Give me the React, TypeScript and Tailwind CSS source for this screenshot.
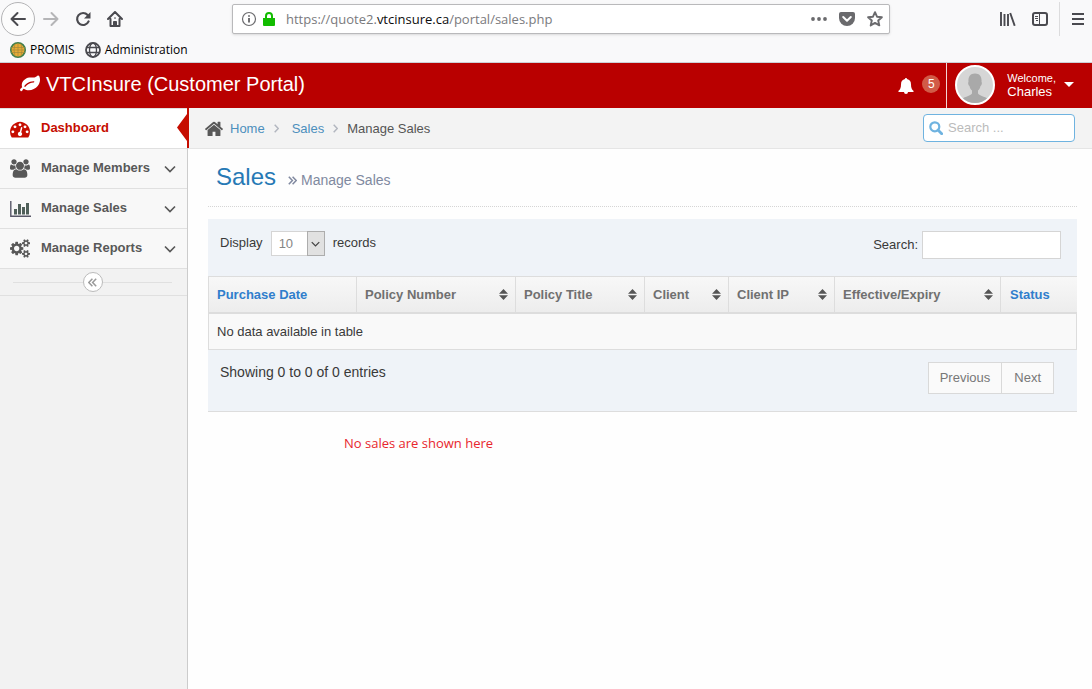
import type { ReactNode } from "react";

const LEAF =
  "M1280 704q0-26-19-45t-45-19q-172 0-318 49.5t-259.5 134-235.5 219.5q-19 21-19 45 0 26 19 45t45 19q24 0 45-19 27-24 74-71t67-66q137-124 268.5-176t313.5-52q26 0 45-19t19-45zm512-198q0 95-20 193-46 224-184.5 383t-357.5 268q-214 108-438 108-148 0-286-47-15-5-88-42t-96-37q-16 0-39.5 32t-45 70-52.5 70-60 32q-43 0-63.5-17.5t-45.5-59.5q-2-4-6-11t-5.5-10-3-9.5-1.5-13.5q0-35 31-73.5t68-65.5 68-56 31-48q0-4-14-38t-16-44q-9-51-9-104 0-115 43.5-220t119-184.5 170.5-139 204-95.5q55-18 145-25.5t179.5-9 178.5-6 163.5-24 113.5-56.5l29.5-29.5 29.5-28 27-20 36.5-16 43.5-4.5q39 0 70.5 46t47.5 112 24 124 8 96z";
const GAUGE =
  "M384 1152q0-53-37.5-90.5t-90.5-37.5-90.5 37.5-37.5 90.5 37.5 90.5 90.5 37.5 90.5-37.5 37.5-90.5zm192-448q0-53-37.5-90.5t-90.5-37.5-90.5 37.5-37.5 90.5 37.5 90.5 90.5 37.5 90.5-37.5 37.5-90.5zm428 481l101-382q6-26-7.5-48.5t-38.5-29.5-48 6.5-30 39.5l-101 382q-60 5-107 43.5t-63 98.5q-20 77 20 146t117 89 146-20 89-117q16-60-6-117t-72-91zm660-33q0-53-37.5-90.5t-90.5-37.5-90.5 37.5-37.5 90.5 37.5 90.5 90.5 37.5 90.5-37.5 37.5-90.5zm-640-640q0-53-37.5-90.5t-90.5-37.5-90.5 37.5-37.5 90.5 37.5 90.5 90.5 37.5 90.5-37.5 37.5-90.5zm448 192q0-53-37.5-90.5t-90.5-37.5-90.5 37.5-37.5 90.5 37.5 90.5 90.5 37.5 90.5-37.5 37.5-90.5zm320 448q0 261-141 483-19 29-54 29h-1402q-35 0-54-29-141-221-141-483 0-182 71-348t191-286 286-191 348-71 348 71 286 191 191 286 71 348z";
const USERS =
  "M593 896q-162 5-265 128h-134q-82 0-138-40.5t-56-118.5q0-353 124-353 6 0 43.5 21t97.5 42.5 119 21.5q67 0 133-23-5 37-5 66 0 139 81 256zm1071 637q0 120-73 189.5t-194 69.5h-874q-121 0-194-69.5t-73-189.5q0-53 3.5-103.5t14-109 26.5-108.5 43-97.5 62-81 85.5-53.5 111.5-20q10 0 43 21.5t73 48 107 48 135 21.5 135-21.5 107-48 73-48 43-21.5q61 0 111.5 20t85.5 53.5 62 81 43 97.5 26.5 108.5 14 109 3.5 103.5zm-1024-1277q0 106-75 181t-181 75-181-75-75-181 75-181 181-75 181 75 75 181zm704 384q0 159-112.5 271.5t-271.5 112.5-271.5-112.5-112.5-271.5 112.5-271.5 271.5-112.5 271.5 112.5 112.5 271.5zm576 225q0 78-56 118.5t-138 40.5h-134q-103-123-265-128 81-117 81-256 0-29-5-66 66 23 133 23 59 0 119-21.5t97.5-42.5 43.5-21q124 0 124 353zm-128-609q0 106-75 181t-181 75-181-75-75-181 75-181 181-75 181 75 75 181z";
const COGS =
  "M896 896q0-106-75-181t-181-75-181 75-75 181 75 181 181 75 181-75 75-181zm768 512q0-52-38-90t-90-38-90 38-38 90q0 53 37.5 90.5t90.5 37.5 90.5-37.5 37.5-90.5zm0-1024q0-52-38-90t-90-38-90 38-38 90q0 53 37.5 90.5t90.5 37.5 90.5-37.5 37.5-90.5zm-384 421v185q0 10-7 19.5t-16 10.5l-155 24q-11 35-32 76 34 48 90 115 7 11 7 20 0 12-7 19-23 30-82.5 89.5t-78.5 59.5q-11 0-21-7l-115-90q-37 19-77 31-11 108-23 155-7 24-30 24h-186q-11 0-20-7.5t-10-17.5l-23-153q-34-10-75-31l-118 89q-7 7-20 7-11 0-21-8-144-133-144-160 0-9 7-19 10-14 41-53t47-61q-23-44-35-82l-152-24q-10-1-17-9.5t-7-19.5v-185q0-10 7-19.5t16-10.5l155-24q11-35 32-76-34-48-90-115-7-11-7-20 0-12 7-20 22-30 82-89t79-59q11 0 21 7l115 90q34-18 77-32 11-108 23-154 7-24 30-24h186q11 0 20 7.5t10 17.5l23 153q34 10 75 31l118-89q8-7 20-7 11 0 21 8 144 133 144 160 0 8-7 19-12 16-42 54t-45 60q23 48 34 82l152 23q10 2 17 10.5t7 19.5zm640 533v140q0 16-149 31-12 27-30 52 51 113 51 138 0 4-4 7-122 71-124 71-8 0-46-47t-52-68q-20 2-30 2t-30-2q-14 21-52 68t-46 47q-2 0-124-71-4-3-4-7 0-25 51-138-18-25-30-52-149-15-149-31v-140q0-16 149-31 13-29 30-52-51-113-51-138 0-4 4-7 4-2 35-20t59-34 30-16q8 0 46 46.5t52 67.5q20-2 30-2t30 2q51-71 92-112l6-2q4 0 124 70 4 3 4 7 0 25-51 138 17 23 30 52 149 15 149 31zm0-1024v140q0 16-149 31-12 27-30 52 51 113 51 138 0 4-4 7-122 71-124 71-8 0-46-47t-52-68q-20 2-30 2t-30-2q-14 21-52 68t-46 47q-2 0-124-71-4-3-4-7 0-25 51-138-18-25-30-52-149-15-149-31v-140q0-16 149-31 13-29 30-52-51-113-51-138 0-4 4-7 4-2 35-20t59-34 30-16q8 0 46 46.5t52 67.5q20-2 30-2t30 2q51-71 92-112l6-2q4 0 124 70 4 3 4 7 0 25-51 138 17 23 30 52 149 15 149 31z";
const HOME =
  "M1472 992v480q0 26-19 45t-45 19h-384v-384h-256v384h-384q-26 0-45-19t-19-45v-480q0-1 .5-3t.5-3l575-474 575 474q1 2 1 6zm223-69l-62 74q-8 9-21 11h-3q-13 0-21-7l-692-577-692 577q-12 8-24 7-13-2-21-11l-62-74q-8-10-7-23.5t11-21.5l719-599q32-26 76-26t76 26l244 204v-195q0-14 9-23t23-9h192q14 0 23 9t9 23v408l219 182q10 8 11 21.5t-7 23.5z";
const BELL =
  "M8 0c.7 0 1 .5 1 1.1 2.600.5 4 2.400 4 5.300 0 3.500.9 5.200 2.700 6.600 0 .6-.4 1-1 1H10a2 2 0 0 1-4 0H1.300c-.6 0-1-.4-1-1C2.100 11.600 3 9.900 3 6.400c0-2.900 1.400-4.800 4-5.300C7 .5 7.300 0 8 0z";

function Glyph({ d, box, className }: { d: string; box: string; className: string }) {
  return (
    <svg viewBox={box} className={className} fill="currentColor" aria-hidden="true">
      <path d={d} />
    </svg>
  );
}

function Chevron({ className }: { className: string }) {
  return (
    <svg viewBox="0 0 12 8" className={className} fill="none" stroke="currentColor" strokeWidth="1.7" aria-hidden="true">
      <path d="M1 1.5l5 5 5-5" />
    </svg>
  );
}

function DoubleAngle({ className }: { className: string }) {
  return (
    <svg viewBox="0 0 9 9" className={className} fill="none" stroke="currentColor" strokeWidth="1.5" aria-hidden="true">
      <path d="M.8.8l3.6 3.7L.8 8.2M4.600.8l3.600 3.700-3.600 3.700" />
    </svg>
  );
}

function BrowserChrome() {
  return (
    <div className="h-[63px] border-b border-[#ccd0d6] bg-[#f9f9fa] font-['Open_Sans','Noto_Sans',sans-serif] text-[#4a4a4f]">
      <div className="flex h-[38px] items-center">
        <button aria-label="Back" className="ml-px flex size-[34px] items-center justify-center rounded-full border border-[#b4b4b6] bg-[#fcfcfc]">
          <svg viewBox="0 0 16 16" className="size-4" fill="none" stroke="currentColor" strokeWidth="2" strokeLinecap="round" strokeLinejoin="round">
            <path d="M15 8H1.5M7.5 2l-6 6 6 6" />
          </svg>
        </button>
        <button aria-label="Forward" className="ml-2 text-[#b5b5b7]">
          <svg viewBox="0 0 16 16" className="size-4" fill="none" stroke="currentColor" strokeWidth="2" strokeLinecap="round" strokeLinejoin="round">
            <path d="M1 8h13.5M8.5 2l6 6-6 6" />
          </svg>
        </button>
        <button aria-label="Reload" className="ml-4">
          <svg viewBox="0 0 16 16" className="size-4" fill="none" stroke="currentColor" strokeWidth="2.2" strokeLinecap="round">
            <path d="M13.6 10.4A6 6 0 1 1 12.6 4" />
            <path d="M15.5 1v6.500H9z" fill="currentColor" stroke="none" />
          </svg>
        </button>
        <button aria-label="Home page" className="ml-4">
          <svg viewBox="0 0 16 16" className="size-4" fill="none" stroke="currentColor" strokeWidth="2" strokeLinecap="round" strokeLinejoin="round">
            <path d="M1 8l7-7 7 7M3.5 8v7h9V8" />
            <path d="M6.500 15v-4.500h3V15z" fill="currentColor" strokeWidth="1" />
            <path d="M8 7v.1" strokeWidth="1.600" />
          </svg>
        </button>
        <div className="ml-[109px] flex h-[30px] w-[658px] items-center rounded-xs border border-[#b9b9bb] bg-white pr-1.5 pl-2 shadow-sm">
          <svg viewBox="0 0 16 16" className="size-4" fill="none" stroke="#6b6b6e" aria-hidden="true">
            <circle cx="8" cy="8" r="6.5" strokeWidth="1.200" />
            <path d="M8 7v4.500M8 4.200v1.600" strokeWidth="1.900" />
          </svg>
          <svg viewBox="0 0 12 14" className="ml-1.5 h-3.5 w-3" aria-hidden="true">
            <path d="M0 6h12v7a1 1 0 0 1-1 1H1a1 1 0 0 1-1-1z" fill="#12bc00" />
            <path d="M3 7V4a3 3 0 0 1 6 0v3" fill="none" stroke="#12bc00" strokeWidth="2" />
          </svg>
          <div className="ml-[11px] flex-1 pt-0.5 text-[13px] text-[#7a7a7d]">
            https://quote2.<span className="text-[#0c0c0d]">vtcinsure.ca</span>/portal/sales.php
          </div>
          <svg viewBox="0 0 16 4" className="h-1 w-4" fill="#6a6a6d" aria-hidden="true">
            <circle cx="2" cy="2" r="1.9" />
            <circle cx="8" cy="2" r="1.9" />
            <circle cx="14" cy="2" r="1.9" />
          </svg>
          <svg viewBox="0 0 16 14" className="ml-3 h-3.5 w-4" aria-hidden="true">
            <path d="M2 0h12a2 2 0 0 1 2 2v4a8 8 0 0 1-16 0V2a2 2 0 0 1 2-2z" fill="#6a6a6d" />
            <path d="M4.200 5L8 8.700 11.800 5" fill="none" stroke="#fff" strokeWidth="2" strokeLinecap="round" strokeLinejoin="round" />
          </svg>
          <svg viewBox="0 0 16 16" className="ml-3 size-4" fill="none" stroke="#6a6a6d" strokeWidth="1.9" strokeLinejoin="round" aria-hidden="true">
            <path d="M8 1.200l2 4.500 4.900.5-3.700 3.300 1.100 4.900L8 11.900l-4.300 2.500 1.100-4.900L1.100 6.200 6 5.700z" />
          </svg>
        </div>
        <div className="ml-auto flex h-[34px] items-center">
          <svg viewBox="0 0 16 14" className="h-3.5 w-4" fill="none" stroke="currentColor" strokeWidth="1.9" aria-hidden="true">
            <path d="M1 0v14M4.500 2v12M8 2v12M10.200 1l4.500 12.800" />
          </svg>
          <svg viewBox="0 0 16 14" className="ml-4 h-3.5 w-4" fill="none" stroke="currentColor" aria-hidden="true">
            <rect x="1" y="1" width="14" height="12" rx="2" strokeWidth="2" />
            <path d="M7.500 1v12M3 4.500h3M3 6.500h3M4 8.500h2" />
          </svg>
          <div className="ml-[11px] mr-3 h-[34px] border-l border-[#dcdcdd]" />
          <svg viewBox="0 0 12 12" className="mr-2 size-3" stroke="currentColor" strokeWidth="2" aria-hidden="true">
            <path d="M0 1h12M0 6h12M0 11h12" />
          </svg>
        </div>
      </div>
      <div className="flex h-6 items-center pl-2.5 text-xs text-black">
        <svg viewBox="0 0 16 16" className="size-4" aria-hidden="true">
          <circle cx="8" cy="8" r="7.200" fill="#e8ab35" stroke="#3d7d4b" strokeWidth="1.600" />
          <path d="M1 5.500h14M1 8h14M1 10.500h14M8 1v14M5 1.500Q3 8 5 14.500M11 1.500Q13 8 11 14.500" fill="none" stroke="#a08a3c" strokeWidth=".7" />
        </svg>
        <a href="#promis" className="ml-1">PROMIS</a>
        <svg viewBox="0 0 16 16" className="ml-2.5 size-4" fill="none" stroke="#4a4a4f" strokeWidth="1.3" aria-hidden="true">
          <circle cx="8" cy="8" r="7" strokeWidth="1.8" />
          <ellipse cx="8" cy="8" rx="3.5" ry="7" />
          <path d="M1.500 5.500h13M1.500 10.500h13" />
        </svg>
        <a href="#administration" className="ml-1">Administration</a>
      </div>
    </div>
  );
}

function PortalHeader() {
  return (
    <header className="flex h-[45px] items-stretch bg-[#b90000] text-white">
      <a href="#portal" className="ml-5 flex items-center pb-1 text-xl">
        <Glyph d={LEAF} box="0 0 1792 1792" className="mr-1.5 size-5" />
        VTCInsure (Customer Portal)
      </a>
      <div className="ml-auto flex">
        <button aria-label="Notifications" className="flex items-center pr-1.5 pb-1">
          <Glyph d={BELL} box="0 0 16 16" className="mt-1 size-4" />
          <span className="ml-2 flex size-[18px] items-center justify-center rounded-full bg-[#d15b47] text-xs">5</span>
        </button>
        <button className="flex items-center border-l border-[#f3d4d4] pr-[18px] pb-0.5 pl-2 text-left">
          <svg viewBox="0 0 40 40" className="size-10" aria-hidden="true">
            <clipPath id="portrait">
              <circle cx="20" cy="20" r="18" />
            </clipPath>
            <circle cx="20" cy="20" r="19" fill="#d6d6d6" stroke="#fff" strokeWidth="2" />
            <path clipPath="url(#portrait)" fill="#a9a9a9" d="M20 8.500c-5 0-7 3.500-6.500 8.500-.8.500-.3 3.500 1 4 .4 2 1.300 3.500 2.500 4.500v3c-2 3-9 3-11.500 7V40h29v-4.500c-2.500-4-9.500-4-11.500-7v-3c1.200-1 2.100-2.500 2.500-4.500 1.300-.5 1.800-3.500 1-4 .5-5-1.500-8.500-6.500-8.500z" />
          </svg>
          <span className="ml-3 text-[13px] leading-[14px]">
            <span className="block text-[11px]">Welcome,</span>
            Charles
          </span>
          <svg viewBox="0 0 10 5" className="ml-2 h-[5px] w-2.5" fill="currentColor" aria-hidden="true">
            <path d="M0 0h10L5 5z" />
          </svg>
        </button>
      </div>
    </header>
  );
}

function NavItem({ icon, label }: { icon: ReactNode; label: string }) {
  return (
    <li className="border-t border-[#e0e0e0]">
      <a href="#menu" className="flex h-[39px] items-center bg-[#f8f8f8] pr-[11px] pl-2.5 text-[#585858]">
        <span className="flex w-5 justify-center">{icon}</span>
        <span className="mb-0.5 ml-[11px] flex-1">{label}</span>
        <Chevron className="h-2 w-3" />
      </a>
    </li>
  );
}

function Sidebar() {
  return (
    <nav className="w-[188px] shrink-0 border-r border-[#cccccc] bg-[#f2f2f2]">
      <ul className="text-[13px] font-bold">
        <li className="relative border-t border-[#e0e0e0]">
          <a href="#dashboard" className="flex h-[39px] items-center bg-white pl-2.5 text-[#c60d00]">
            <Glyph d={GAUGE} box="0 0 1792 1792" className="size-5" />
            <span className="mb-0.5 ml-[11px]">Dashboard</span>
          </a>
          <svg viewBox="0 0 12 40" className="absolute -top-px -right-[2px] h-10 w-3" fill="#c60d00" aria-hidden="true">
            <path d="M10 0h2v40h-2V33L0 19.500 10 6z" />
          </svg>
        </li>
        <NavItem label="Manage Members" icon={<Glyph d={USERS} box="0 0 1920 1792" className="h-[19px] w-5" />} />
        <NavItem
          label="Manage Sales"
          icon={
            <svg viewBox="0 0 21 16" className="h-4 w-[21px] shrink-0" aria-hidden="true">
              <path d="M.8 0v15.200H21" fill="none" stroke="#585868" strokeWidth="1.4" />
              <path d="M4 8h3v5.500H4zM8 3h3v10.500H8zM12 6h3v7.500h-3zM16 2h3v11.500h-3z" fill="#50605a" />
            </svg>
          }
        />
        <NavItem label="Manage Reports" icon={<Glyph d={COGS} box="0 0 1920 1792" className="h-[19px] w-5" />} />
      </ul>
      <div className="flex h-7 items-center border-y border-[#e0e0e0] pr-[15px] pl-[13px]">
        <div className="flex-1 border-t border-[#e0e0e0]" />
        <button aria-label="Collapse menu" className="flex size-5 items-center justify-center rounded-full border border-[#bbbbbb] bg-white text-[#999999]">
          <DoubleAngle className="size-[9px] rotate-180" />
        </button>
        <div className="flex-1 border-t border-[#e0e0e0]" />
      </div>
    </nav>
  );
}

function Crumb() {
  return (
    <svg viewBox="0 0 5 9" className="h-[9px] w-[5px]" fill="none" stroke="#b2b6bf" strokeWidth="1.5" aria-hidden="true">
      <path d="M.7.7l3.600 3.800L.7 8.300" />
    </svg>
  );
}

function Breadcrumbs() {
  return (
    <div className="flex h-[41px] items-center border-b border-[#e5e5e5] bg-[#f3f3f3] px-[17px] text-[13px] text-[#4c8fbd]">
      <nav aria-label="Breadcrumb" className="flex items-center pt-px">
        <Glyph d={HOME} box="90 200 1612 1400" className="mr-[7px] h-4 w-[18px] text-[#585858]" />
        <a href="#home" className="mr-[9px]">Home</a>
        <Crumb />
        <a href="#sales" className="mr-[9px] ml-[13px]">Sales</a>
        <Crumb />
        <span className="ml-[9px] text-[#555555]">Manage Sales</span>
      </nav>
      <label className="ml-auto flex h-7 w-[152px] items-center rounded-[4px] border border-[#6fb3e0] bg-white px-[5px]">
        <svg viewBox="0 0 14 14" className="size-3.5 shrink-0" fill="none" stroke="#6fb3e0" strokeWidth="2.2" aria-hidden="true">
          <circle cx="5.8" cy="5.8" r="4.5" />
          <path d="M9 9l3.700 3.700" strokeWidth="2.8" strokeLinecap="round" />
        </svg>
        <input aria-label="Search the portal" placeholder="Search ..." className="ml-[5px] w-full min-w-0 outline-none placeholder:text-[#bbbbbb]" />
      </label>
    </div>
  );
}

const sortableHeads = ["Policy Number", "Policy Title", "Client", "Client IP", "Effective/Expiry"];

function SortableHead({ label }: { label: string }) {
  return (
    <th className="border-l border-[#dddddd] pr-[7px] pl-2 text-[#707070]">
      <div className="flex items-center justify-between">
        {label}
        <svg viewBox="0 0 9 11" className="h-[11px] w-[9px]" fill="#555555" aria-hidden="true">
          <path d="M4.500 0L9 4.700H0zM0 6.300h9L4.500 11z" />
        </svg>
      </div>
    </th>
  );
}

function SalesTable() {
  return (
    <section className="border-b border-[#dddddd] bg-[#eff3f8] text-[13px] text-[#393939]">
      <div className="flex h-[57px] items-start justify-between pt-3 pr-4 pl-3">
        <div className="flex h-[25px] items-center">
          <label htmlFor="size" className="pb-0.5">Display</label>
          <div className="relative mx-2 h-[25px] w-[54px]">
            <select id="size" className="size-full appearance-none border border-[#d5d5d5] bg-white pl-[7px] text-[#858585]">
              <option>10</option>
            </select>
            <span className="pointer-events-none absolute top-0 right-0 flex h-[25px] w-[18px] items-center justify-center border border-[#adadad] bg-[#e1e1e1] text-[#444444]">
              <Chevron className="h-1.5 w-[9px]" />
            </span>
          </div>
          <span className="pb-0.5">records</span>
        </div>
        <label className="flex items-center">
          Search:
          <input className="ml-1 h-7 w-[139px] border border-[#d5d5d5] bg-white px-1" />
        </label>
      </div>
      <table className="w-full table-fixed border-separate border-spacing-0 text-left">
        <colgroup>
          <col className="w-[148px]" />
          <col className="w-[159px]" />
          <col className="w-[129px]" />
          <col className="w-[84px]" />
          <col className="w-[106px]" />
          <col className="w-[166px]" />
          <col />
        </colgroup>
        <thead>
          <tr className="h-[38px] bg-linear-to-b from-[#f8f8f8] to-[#ececec] *:border-t *:border-b-2 *:border-[#dddddd] *:font-bold">
            <th className="border-l pl-2 text-[#307ecc]">Purchase Date</th>
            {sortableHeads.map((label) => (
              <SortableHead key={label} label={label} />
            ))}
            <th className="border-l pl-[9px] text-[#307ecc]">Status</th>
          </tr>
        </thead>
        <tbody>
          <tr className="h-9 bg-[#f9f9f9]">
            <td colSpan={7} className="border-x border-b border-[#dddddd] px-2">
              No data available in table
            </td>
          </tr>
        </tbody>
      </table>
      <div className="flex h-[61px] items-start justify-between pt-3 pr-[23px] pl-3">
        <span className="text-sm">Showing 0 to 0 of 0 entries</span>
        <div className="flex text-[#777777]">
          <button className="h-8 border border-[#d9d9d9] bg-[#fafafa] px-[11px]">Previous</button>
          <button className="h-8 border border-l-0 border-[#d9d9d9] bg-[#fafafa] px-3">Next</button>
        </div>
      </div>
    </section>
  );
}

export default function App() {
  return (
    <div className="flex min-h-screen flex-col bg-[#fefefe] font-['Liberation_Sans',Arial,sans-serif]">
      <BrowserChrome />
      <PortalHeader />
      <div className="flex flex-1">
        <Sidebar />
        <main className="min-w-0 flex-1">
          <Breadcrumbs />
          <div className="pr-[15px] pl-5">
            <div className="mb-3 flex h-[58px] items-start border-b border-dotted border-[#d5d5d5] pt-3 pl-2">
              <h1 className="text-2xl text-[#2679b5]">Sales</h1>
              <p className="mt-[9px] ml-3 flex items-center text-sm text-[#8089a0]">
                <DoubleAngle className="mr-1 size-[9px]" />
                Manage Sales
              </p>
            </div>
            <SalesTable />
            <p className="mt-[21px] ml-[136px] font-['Open_Sans','Noto_Sans',sans-serif] text-[13px] leading-5 text-[#e8262d]">No sales are shown here</p>
          </div>
        </main>
      </div>
    </div>
  );
}
